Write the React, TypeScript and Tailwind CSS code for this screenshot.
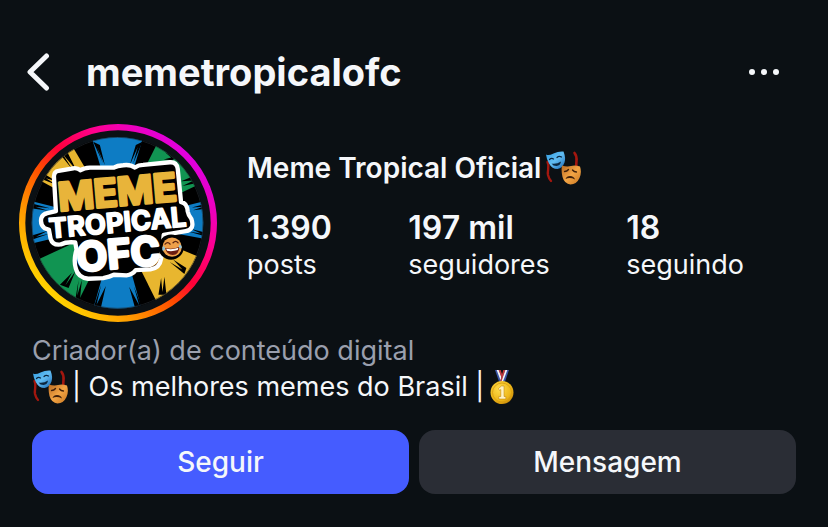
type Stat = {
  value: string;
  label: string;
};

const stats: Stat[] = [
  { value: "1.390", label: "posts" },
  { value: "197 mil", label: "seguidores" },
  { value: "18", label: "seguindo" },
];

const MasksEmoji = () => (
  <svg viewBox="0 0 36 36" className="size-9 shrink-0" role="img" aria-label="Máscaras">
    <defs>
      <linearGradient id="maskBlue" x1="0" y1="0" x2="1" y2="1">
        <stop offset="0" stopColor="#2f9be0" />
        <stop offset="0.5" stopColor="#62bdf2" />
        <stop offset="1" stopColor="#1b68b4" />
      </linearGradient>
      <linearGradient id="maskGold" x1="0" y1="0" x2="1" y2="1">
        <stop offset="0" stopColor="#b96a22" />
        <stop offset="0.5" stopColor="#f3a545" />
        <stop offset="1" stopColor="#c87520" />
      </linearGradient>
    </defs>
    <path d="M2.500 12C5 17 2 20 3 25q1 4 3 6" fill="none" stroke="#a3170f" strokeWidth="2.400" strokeLinecap="round" />
    <path d="M29.500 3q2.500 3 2 8t0 6" fill="none" stroke="#a3170f" strokeWidth="2.600" strokeLinecap="round" />
    <path d="M1 4.500Q3.500 6 8.500 3.500T18.500 1.500Q21 8 19.500 12.500 17.500 18 12.500 19 7 19 4 13.500 1.500 9 1 4.500Z" fill="url(#maskBlue)" />
    <path d="M4.500 9.500q2-2 4 -.5M12 7.500q2-2 4.500-.5" fill="none" stroke="#0b2740" strokeWidth="1.200" strokeLinecap="round" />
    <path d="M6.500 13.500q5 1 9.500-2-.5 4-4.500 4.500-3.500 0-5-2.500Z" fill="#0b2740" />
    <path d="M17 15.500q5 1.500 9 .5t9 .5q2 6-.5 11.500-3 6.500-9 6.500-6-.5-8-7.500-1.500-6-.5-11.500Z" fill="url(#maskGold)" />
    <path d="M19.500 21.500q2.500 0 4-2M27.500 20q1.500 2 4 2" fill="none" stroke="#40200a" strokeWidth="1.300" strokeLinecap="round" />
    <path d="M20.500 29q1-3 4.500-3 4 0 5 3.500-5-2.500-9.500-.5Z" fill="#40200a" />
  </svg>
);

const MedalEmoji = () => (
  <svg viewBox="0 0 36 36" className="size-9 shrink-0" role="img" aria-label="Medalha de ouro">
    <defs>
      <radialGradient id="medalGold" cx="0.4" cy="0.35" r="0.7">
        <stop offset="0" stopColor="#ffdc4d" />
        <stop offset="0.7" stopColor="#eeb719" />
        <stop offset="1" stopColor="#c98a08" />
      </radialGradient>
    </defs>
    <path d="M11 1h5l4.500 13h-5Z" fill="#3a56a8" />
    <path d="M12.700 1h2l4.500 12h-2Z" fill="#f4f4f4" />
    <path d="M14.700 1h2l3.500 11-1 1Z" fill="#c23a3a" />
    <path d="M25 1h-5l-4.500 13h5Z" fill="#3a56a8" />
    <path d="M23.300 1h-2l-4.500 12h2Z" fill="#f4f4f4" />
    <path d="M21.300 1h-2l-3 11 1 1Z" fill="#c23a3a" />
    <circle cx="18" cy="23.500" r="11.500" fill="url(#medalGold)" />
    <circle cx="18" cy="23.500" r="9.500" fill="none" stroke="#d69c10" strokeWidth="0.800" />
    <path d="M14.500 19.500l3-2.500h2.500v10.500h1.800V30h-7v-2.500h2V20.500l-1.300 1Z" fill="#fff3c4" stroke="#b87b06" strokeWidth="0.500" />
  </svg>
);

const Avatar = () => (
  <svg viewBox="27 27 595 595" className="size-[198px] shrink-0" role="img" aria-label="Meme Tropical OFC">
    <defs>
      <linearGradient id="storyRing" gradientUnits="userSpaceOnUse" x1="115" y1="535" x2="535" y2="115">
        <stop offset="0" stopColor="#ffd400" />
        <stop offset="0.220" stopColor="#ff9400" />
        <stop offset="0.420" stopColor="#ff4a00" />
        <stop offset="0.550" stopColor="#ff0038" />
        <stop offset="0.750" stopColor="#ff0090" />
        <stop offset="1" stopColor="#e000e0" />
      </linearGradient>
      <clipPath id="photo">
        <circle cx="323" cy="324" r="258" />
      </clipPath>
    </defs>
    <circle cx="324.500" cy="324.500" r="288" fill="none" stroke="url(#storyRing)" strokeWidth="19" />
    <g clipPath="url(#photo)">
      <rect x="60" y="60" width="530" height="530" fill="#000" />
      <path d="M323 324L240 50h165Z" fill="#0d7cc4" />
      <path d="M323 324L245 600h155Z" fill="#0d7cc4" />
      <path d="M323 324L50 255v135Z" fill="#0d7cc4" />
      <path d="M323 324L600 255v120Z" fill="#0d7cc4" />
      <path d="M323 324L185 90 60 180Z" fill="#e8b62f" />
      <path d="M323 324L445 80 585 200Z" fill="#119452" />
      <path d="M323 324L50 450 185 600Z" fill="#119452" />
      <path d="M323 324L455 590 600 440Z" fill="#e8b62f" />
      <g fill="#000">
        <path d="M250 80l30 66-19-50 24 54-15-60ZM398 80l-28 66 14-50-24 54 18-60Z" />
        <path d="M248 588l26-78-14 60 28-56-16 70ZM400 588l-28-74 16 58-30-56 20 72Z" />
        <path d="M150 117l40 50-32-50 42 50-30-60ZM95 192l45 18-32-20 32 10-40-25Z" />
        <path d="M466 112l18 16-22 6 28 2-30 14 42-22ZM558 205l-40 8 34-16-38 2 44-18Z" />
        <path d="M60 264l60 16-44-4 38 12-52-8ZM62 376l58-20-42 10 36-18-54 16Z" />
        <path d="M590 266l-44 12 34-2-30 10 40-4ZM590 366l-54-16 38 6-32-14 48 12Z" />
        <path d="M150 510l36-36-20 38 30-42-20 50ZM196 556l10-60-4 46 14-46-6 60Z" />
        <path d="M446 540l8-50 4 42 6-46 6 54ZM530 460l-40-26 28 30-38-22 44 36Z" />
      </g>
      <circle cx="323" cy="324" r="257" fill="none" stroke="#262b30" strokeWidth="2" />
    </g>
    <path
      d="M132 185Q132 170 146 168L190 160Q202 158 212 166Q222 159 240 158L312 158Q322 152 340 151Q362 148 375 158Q386 150 400 150L480 142Q502 140 504 162L514 262Q532 264 534 290Q536 302 545 312Q556 344 528 349L462 360L454 432Q450 460 422 464L378 466Q368 480 350 482L312 480Q300 486 280 490L235 492Q204 488 198 462Q190 436 200 405L196 383Q170 380 152 389Q128 392 122 372L117 345L104 340Q90 330 94 310Q98 298 112 295L138 289Z"
      fill="#000"
      stroke="#fff"
      strokeWidth="13"
      strokeLinejoin="round"
    />
    <circle cx="484" cy="397" r="38" fill="#000" />
    <g
      transform="rotate(-5 324 324)"
      fontFamily="Inter, sans-serif"
      fontWeight="700"
      textAnchor="middle"
      strokeLinejoin="round"
    >
      <text x="330" y="273" fontSize="116" fill="#e8b43a" stroke="#e8b43a" strokeWidth="9">MEME</text>
      <text x="323" y="352" fontSize="82" fill="#fff" stroke="#fff" strokeWidth="5">TROPICAL</text>
      <text x="317" y="460" fontSize="120" fill="#fff" stroke="#fff" strokeWidth="9">OFC</text>
    </g>
    <circle cx="487" cy="397" r="29" fill="#efa04a" />
    <path d="M466 388q8-9 15 0M490 384q8-9 15 0" fill="none" stroke="#5a2410" strokeWidth="4" strokeLinecap="round" />
    <path d="M466 400q22 6 43-4-1 24-20 25-18 0-23-21Z" fill="#6b1d12" />
    <path d="M469 402q19 4 37-3l-2 7q-17 5-32 2Z" fill="#fff" />
    <path d="M461 393q-6 10-2 15 7 0 7-8ZM510 388q8 5 6 12-6 3-9-5Z" fill="#8fc4dc" />
  </svg>
);

const App = () => {
  return (
    <main className="min-h-screen w-full bg-[#0b1014] px-8 pt-11 pb-8 font-['Inter',sans-serif] text-[#f5f7fa]">
      <header className="flex h-14 items-center">
        <button type="button" aria-label="Voltar" className="-ml-5 flex w-[52px] justify-center">
          <svg viewBox="0 0 24 40" className="h-10 w-6" fill="none" stroke="currentColor" strokeWidth="5" strokeLinecap="round" strokeLinejoin="round">
            <path d="M20.500 4L4 20l16.500 16" />
          </svg>
        </button>
        <h1 className="ml-[22px] text-[38px] leading-[48px] font-bold">memetropicalofc</h1>
        <button type="button" aria-label="Mais opções" className="mr-4 ml-auto">
          <svg viewBox="0 0 32 8" className="h-2 w-8" fill="currentColor">
            <circle cx="4" cy="4" r="3" />
            <circle cx="16" cy="4" r="3" />
            <circle cx="28" cy="4" r="3" />
          </svg>
        </button>
      </header>

      <section className="mt-6 flex">
        <div className="-ml-[13px]">
          <Avatar />
        </div>
        <div className="ml-[30px] flex-1 pt-6">
          <h2 className="flex items-center gap-1 text-[28px] leading-10 font-semibold">
            Meme Tropical Oficial
            <MasksEmoji />
          </h2>
          <ul className="mt-5 mr-[52px] flex justify-between">
            {stats.map((stat) => (
              <li key={stat.label}>
                <p className="text-[32px] leading-10 font-semibold">{stat.value}</p>
                <p className="text-[27px] leading-[34px]">{stat.label}</p>
              </li>
            ))}
          </ul>
        </div>
      </section>

      <section className="mt-[11px] text-[27px] leading-9">
        <p className="text-[#9a9fad]">Criador(a) de conteúdo digital</p>
        <p className="flex items-center">
          <MasksEmoji />
          <span className="ml-1">| Os melhores memes do Brasil |</span>
          <MedalEmoji />
        </p>
      </section>

      <div className="mt-[25px] grid grid-cols-2 gap-[10px] text-[28px] font-medium">
        <button type="button" className="h-16 rounded-2xl bg-[#455cff]">
          Seguir
        </button>
        <button type="button" className="h-16 rounded-2xl bg-[#2a2d35]">
          Mensagem
        </button>
      </div>
    </main>
  );
};

export default App;
